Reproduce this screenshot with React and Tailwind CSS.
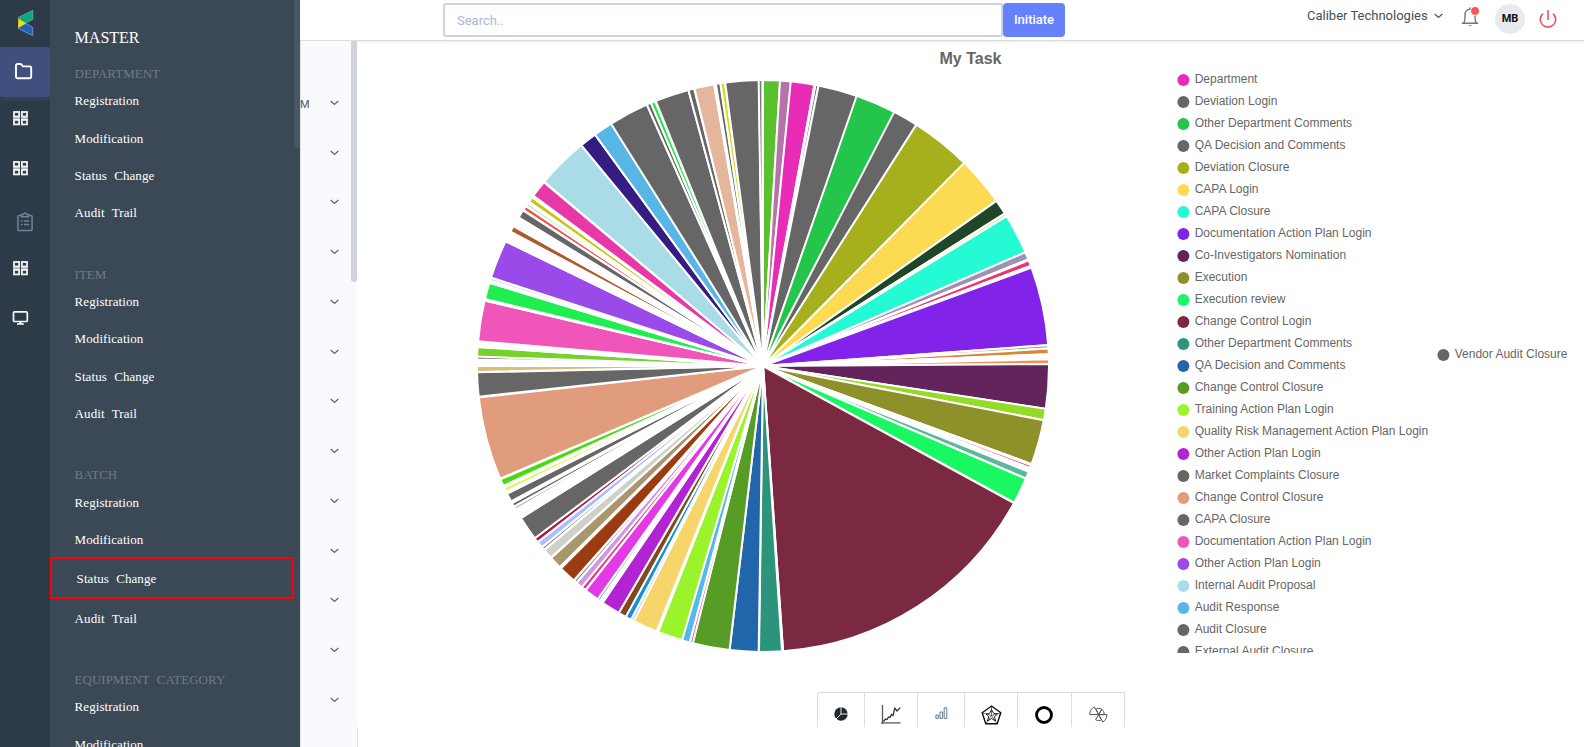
import React from "react";

const G = "#666666";

// [start, end, colour] in degrees clockwise from twelve o'clock
const SLICES = [
  [0.2, 3.22, "#5ac02d"], [3.62, 5.44, "#b673a9"], [5.77, 10.17, "#e92cb7"], [10.79, 10.99, G],
  [11.4, 19.04, G], [19.33, 27.24, "#23c64b"], [27.52, 32.31, G], [32.63, 44.57, "#a6b01c"],
  [44.95, 54.5, "#fcdb53"], [54.92, 57.54, "#204628"], [58.0, 58.2, "#cfe879"], [58.62, 66.4, "#24fad3"],
  [66.76, 67.91, "#9d92b3"], [68.52, 69.3, "#e8386f"], [70.08, 85.57, "#8223e9"], [86.04, 86.24, "#6fa35c"],
  [86.71, 87.45, "#db863d"], [88.86, 89.4, "#f98f4f"], [89.8, 98.47, "#63245b"], [98.81, 100.72, "#94da28"],
  [101.13, 109.86, "#8e9029"], [110.5, 110.75, "#f4489c"], [111.91, 112.96, "#5ab99c"], [113.41, 118.36, "#19f863"],
  [118.85, 175.77, "#7a2940"], [176.38, 180.6, "#2c947b"], [181.07, 186.51, "#2166aa"], [186.92, 194.08, "#579d25"],
  [194.4, 194.65, "#ee62b5"], [195.05, 196.3, "#52b8f0"], [196.65, 201.33, "#9af32b"], [202.05, 206.69, "#f6d56b"],
  [207.06, 207.26, "#a9b9ee"], [207.67, 208.5, "#1791d6"], [208.89, 210.12, "#80491f"], [210.51, 213.91, "#b123d3"],
  [214.97, 215.17, "#468c94"], [215.54, 218.14, "#e33ae6"], [218.6, 219.25, "#e83d80"], [219.51, 220.48, "#d098e4"],
  [220.92, 221.14, "#6f6f6f"], [221.63, 224.76, "#9c3a12"], [225.52, 227.6, "#a8966f"], [228.09, 229.7, "#cfd1c8"],
  [230.22, 230.42, "#6f6f6f"], [230.85, 231.76, "#aebdfd"], [232.19, 232.77, "#a91d45"], [233.15, 237.67, G],
  [240.09, 240.26, "#777777"], [240.76, 241.15, G], [241.93, 243.31, G], [244.19, 244.64, "#d2fc3c"],
  [245.42, 246.44, "#4bd915"], [247, 263.48, "#e19c7d"], [264.04, 268.53, G], [269, 269.8, "#d8be79"],
  [271.52, 271.75, "#777777"], [272.08, 273.62, "#75d22c"], [275.17, 283.02, "#f056b9"], [283.74, 286.74, "#1eee4f"],
  [287.57, 287.74, "#a5e5f0"], [288.22, 295.64, "#9a4ae9"], [298.22, 299.09, "#ad5b2d"], [301.49, 302.78, G],
  [303.28, 303.78, "#ee4f45"], [304.3, 304.5, "#94e68a"], [305.27, 306, "#cac414"], [306.76, 309.78, "#e838a7"],
  [310.3, 320.37, "#aadce8"], [320.75, 323.81, "#341c83"], [324.24, 327.75, "#57b6e6"], [328.12, 335.81, G],
  [336.26, 336.7, G], [337.13, 337.6, "#14f23f"], [338.17, 344.67, G], [345.09, 345.85, G],
  [346.33, 349.96, "#e4b79c"], [350.71, 351.19, G], [351.66, 352.14, "#d0dc1f"], [352.61, 359, G],
  [359.33, 359.66, "#777777"],
];

const R = 286;
const PAD = 0.2;
const pt = (deg) => {
  const a = (deg * Math.PI) / 180;
  return `${(R + Math.sin(a) * R).toFixed(2)} ${(R - Math.cos(a) * R).toFixed(2)}`;
};
const wedge = (a, b) => `M${R} ${R}L${pt(a)}A${R} ${R} 0 0 1 ${pt(b)}Z`;

function Pie() {
  return (
    <svg width="572" height="572" className="block shrink-0">
      {SLICES.map(([a, b, c], i) => {
        const next = SLICES[i + 1];
        return (
          <g key={i} stroke="#fff" strokeWidth="2" strokeLinejoin="bevel">
            <path d={wedge(a - PAD, b + PAD)} fill={c} />
            {next && next[0] - b > 0.6 && <path d={wedge(b + PAD, next[0] - PAD)} fill="#fff" />}
          </g>
        );
      })}
    </svg>
  );
}

const LEGEND = [
  ["#e92cb7", "Department"], [G, "Deviation Login"], ["#23c64b", "Other Department Comments"],
  [G, "QA Decision and Comments"], ["#a6b01c", "Deviation Closure"], ["#fcdb53", "CAPA Login"],
  ["#24fad3", "CAPA Closure"], ["#8223e9", "Documentation Action Plan Login"],
  ["#63245b", "Co-Investigators Nomination"], ["#8e9029", "Execution"], ["#19f863", "Execution review"],
  ["#7a2940", "Change Control Login"], ["#2c947b", "Other Department Comments"],
  ["#2166aa", "QA Decision and Comments"], ["#579d25", "Change Control Closure"],
  ["#9af32b", "Training Action Plan Login"], ["#f6d56b", "Quality Risk Management Action Plan Login"],
  ["#b123d3", "Other Action Plan Login"], [G, "Market Complaints Closure"],
  ["#e19c7d", "Change Control Closure"], [G, "CAPA Closure"], ["#f056b9", "Documentation Action Plan Login"],
  ["#9a4ae9", "Other Action Plan Login"], ["#aadce8", "Internal Audit Proposal"],
  ["#57b6e6", "Audit Response"], [G, "Audit Closure"], [G, "External Audit Closure"],
];

function LegendRow({ color, label }) {
  return (
    <div className="flex h-[22px] shrink-0 items-center whitespace-nowrap text-[12px] leading-[22px] text-[#666]">
      <svg width="13" height="12" className="mr-[4.7px] mt-[2px] shrink-0">
        <circle cx="6.4" cy="6" r="6" fill={color} />
      </svg>
      {label}
    </div>
  );
}

function GridIcon() {
  return (
    <svg width="15" height="15" viewBox="0 0 15 15" fill="none" stroke="#f2f3ee" strokeWidth="1.8">
      <path d="M0.1 7.2H6.9M8.1 7.2H14.9" stroke="#b0b5b8" strokeWidth="2.4" />
      <rect x="1" y="1" width="5.1" height="4.5" />
      <rect x="8.9" y="1" width="5.1" height="4.5" />
      <rect x="1" y="8.9" width="5.1" height="4.5" />
      <rect x="8.9" y="8.9" width="5.1" height="4.5" />
    </svg>
  );
}

function Rail() {
  return (
    <div className="flex w-[50px] shrink-0 flex-col bg-[#2d3a47]">
      <div className="flex h-[47px] pl-[18px] pt-[10px]">
        <svg width="16" height="27" viewBox="0 0 16 27">
          <path d="M0.3 7.5L14.8 0.3V9.2L7.8 13.2L0.3 8.6Z" fill="#0ea57f" stroke="#6fd0b4" strokeWidth="0.6" />
          <path d="M0.3 17.6L7.8 13.4L14.8 17.5V25.6L0.3 18.6Z" fill="#2463b5" stroke="#9bbce6" strokeWidth="0.6" />
          <path d="M0.2 8.4L8 13.2L0.2 18Z" fill="#fbd914" />
        </svg>
      </div>
      <div className="h-[50px] rounded-[2px] bg-[#414f7f] pl-[15px] pt-[16px] shadow-[0_3px_6px_rgba(65,79,110,0.55)]">
        <svg width="18" height="17" viewBox="0 0 18 17" fill="none" stroke="#fff" strokeWidth="1.9" strokeLinejoin="round">
          <path d="M1 2.6Q1 1 2.6 1H6L8 3.4H14.6Q16.2 3.4 16.2 5V13.6Q16.2 15.2 14.6 15.2H2.6Q1 15.2 1 13.6Z" />
        </svg>
      </div>
      <div className="h-[50px] pl-[13px] pt-[14px]"><GridIcon /></div>
      <div className="h-[50px] pl-[13px] pt-[14px]"><GridIcon /></div>
      <div className="h-[50px] pl-[17px] pt-[15px]">
        <svg width="16" height="20" viewBox="0 0 16 20" fill="none" stroke="#72809a" strokeWidth="1.5">
          <path d="M4.5 3.4H2Q0.9 3.4 0.9 4.5V17.4Q0.9 18.5 2 18.5H14Q15.1 18.5 15.1 17.4V4.5Q15.1 3.4 14 3.4H11.5" />
          <path d="M4.5 4.8V2.6H6.3Q6.5 1 8 1T9.7 2.6H11.5V4.8Z" />
          <path d="M3.8 9H5.6M7 9H12.2M3.8 12.6H5.6M7 12.6H12.2" />
        </svg>
      </div>
      <div className="h-[50px] pl-[13px] pt-[14px]"><GridIcon /></div>
      <div className="h-[50px] pl-[12px] pt-[14px]">
        <svg width="17" height="15" viewBox="0 0 17 15" fill="none" stroke="#f7f7f2" strokeWidth="1.7">
          <rect x="1.5" y="0.9" width="13.8" height="9.6" rx="1" />
          <path d="M5 13H11.8" strokeWidth="1.6" />
          <path d="M8.4 10.5V13" strokeWidth="2.6" />
        </svg>
      </div>
    </div>
  );
}

const GROUPS = ["DEPARTMENT", "ITEM", "BATCH", "EQUIPMENT CATEGORY"];
const ITEMS = ["Registration", "Modification", "Status Change", "Audit Trail"];

function Menu() {
  return (
    <div className="flex w-[250px] shrink-0 overflow-hidden bg-[#3b4856] font-['Liberation_Serif','Times_New_Roman',serif] text-[13px] [word-spacing:4px]">
      <div className="w-[244px] shrink-0">
        <div className="h-[64px] pl-[24.6px] pt-[26px] text-[16px] leading-[24px] text-white">MASTER</div>
        {GROUPS.map((g) => (
          <div key={g} className="mb-[34px]">
            <div className="h-[17.3px] pl-[24.6px] leading-[20px] text-[#727b84]">{g}</div>
            {ITEMS.map((t) => (
              <div
                key={t}
                className={
                  "box-content h-[37.35px] pl-[24.6px] leading-[39.2px] tracking-[0.08px] text-white " +
                  (g === "BATCH" && t === "Status Change" ? "w-[215.4px] border-2 border-[#fb0007]" : "")
                }
              >
                {t}
              </div>
            ))}
          </div>
        ))}
      </div>
      <div className="ml-auto h-[148px] w-[6px] rounded-b-[3px] bg-[#4a5767]" />
    </div>
  );
}

function Chevron({ className, color = "#555" }) {
  return (
    <svg width="9" height="6" viewBox="0 0 9 6" fill="none" stroke={color} strokeWidth="1.3" className={className}>
      <path d="M0.7 0.9L4.5 4.4L8.3 0.9" />
    </svg>
  );
}

function Header() {
  return (
    <header className="flex h-[41px] shrink-0 border-b border-[#dcdcdc] bg-white pl-[143px] shadow-[0_1px_2px_rgba(0,0,0,0.08)]">
      <div className="mt-[3px] flex h-[34px]">
        <div className="w-[560px] rounded-[3px] border-2 border-[#cad5e2] pl-[12px] text-[13px] leading-[31px] text-[#a8b8d6]">
          Search..
        </div>
        <div className="w-[62px] rounded-[4px] bg-[#6681fb] text-center text-[13px] font-medium leading-[33px] text-white">
          Initiate
        </div>
      </div>
      <div className="ml-[242px] mt-[6px] h-[20px] w-[121px] whitespace-nowrap text-[13px] leading-[20px] text-[#484e55]">
        Caliber Technologies
      </div>
      <Chevron className="ml-[6px] mt-[13px] shrink-0" />
      <svg width="20" height="21" viewBox="0 0 20 21" fill="none" className="ml-[18px] mt-[6px] shrink-0">
        <path d="M0.8 17.2H17.2M2.6 17.2C4 15.6 4 14 4 9.4C4 5.4 5.6 3.3 9 3.1C12.4 3.3 14 5.4 14 9.4C14 14 14 15.6 15.4 17.2M9 3V1.4" stroke="#66788c" strokeWidth="1.4" />
        <path d="M7 19.2Q9 21 11 19.2Z" fill="#66788c" />
        <circle cx="14" cy="5" r="4.5" fill="#ff5555" stroke="#fff" strokeWidth="1" />
      </svg>
      <div className="ml-[14px] mt-[4px] h-[30px] w-[30px] rounded-full bg-[#e8ebee] text-center text-[11px] font-bold leading-[29px] text-[#111]">
        MB
      </div>
      <svg width="18" height="19" viewBox="0 0 18 19" fill="none" stroke="#e9535d" strokeWidth="1.6" className="ml-[14px] mt-[10px]">
        <path d="M9 0V10" />
        <path d="M4 3.6A7.7 7.7 0 1 0 14 3.6" />
      </svg>
    </header>
  );
}

function SidePanel() {
  return (
    <div className="flex w-[57px] shrink-0 justify-between border-l border-[#e3e4e8] bg-[#f9fafd]">
      <div className="flex w-[40px] flex-col pt-[37px]">
        {Array.from({ length: 13 }, (_, i) => (
          <div key={i} className="flex h-[49.75px] shrink-0 items-center">
            <span className="-ml-px w-[29.5px] pt-[4px] text-[11px] text-[#555]">{i === 0 ? "M" : ""}</span>
            <Chevron color="#666" />
          </div>
        ))}
      </div>
      <div className="h-[241px] w-[6px] rounded-b-[3px] bg-[#ced3dd]" />
    </div>
  );
}

function PieGlyph() {
  return (
    <svg width="14" height="14" viewBox="0 0 14 14" className="ml-[16px] mt-[14px]">
      <circle cx="7" cy="7" r="6.7" fill="#212930" />
      <path d="M7 0V7H14M7 7L2 12" stroke="#fff" strokeWidth="0.9" fill="none" />
    </svg>
  );
}
function LineGlyph() {
  return (
    <svg width="20" height="20" viewBox="0 0 20 20" fill="none" className="ml-[16px] mt-[12px]">
      <path d="M1.5 0V19M0 17.8H19.5" stroke="#555" strokeWidth="1.3" />
      <path d="M2.5 16.5L4.5 14L6 14.5L7.5 12L9 12.5L10.5 9.5L12 10.5L13.8 3.2L16 6L19.3 2.6" stroke="#333" strokeWidth="1.3" />
    </svg>
  );
}
function BarGlyph() {
  return (
    <svg width="13" height="12" viewBox="0 0 13 12" fill="none" stroke="#566b80" strokeWidth="0.9" className="ml-[17px] mt-[14px]">
      <path d="M0.9 8H3.3V11.4H0.9ZM5 5H7.6V11.4H5ZM9.2 0.8H11.8V11.4H9.2Z" />
    </svg>
  );
}
function RadarGlyph() {
  return (
    <svg width="21" height="20" viewBox="0 0 21 20" fill="none" stroke="#111" className="ml-[16px] mt-[12px]">
      <path d="M10.5 1L19.8 7.8L16.2 18.8H4.8L1.2 7.8Z" strokeWidth="1.4" />
      <path d="M10.5 4.5L12.6 8.3L16.5 9L13.5 11.5L14.5 16L10.5 13.5L6.5 16L7.8 11.5L5 9L8.6 8.3Z" strokeWidth="0.9" />
      <path d="M10.5 10.5V1M10.5 10.5L19.8 7.8M10.5 10.5L16.2 18.8M10.5 10.5L4.8 18.8M10.5 10.5L1.2 7.8" strokeWidth="0.6" />
    </svg>
  );
}
function DonutGlyph() {
  return (
    <svg width="18" height="18" viewBox="0 0 18 18" fill="none" className="ml-[17px] mt-[13px]">
      <circle cx="9" cy="9" r="7.5" stroke="#000" strokeWidth="2.8" />
    </svg>
  );
}
function PolarGlyph() {
  return (
    <svg width="19" height="18" viewBox="0 0 19 18" fill="none" stroke="#555" strokeWidth="1" strokeLinejoin="round" className="ml-[17px] mt-[13px]">
      <path d="M9.6 8.6H0.7C0.7 4.6 2.6 2.2 5.4 1Z" />
      <path d="M9.6 8.6L7 3.2C8.6 2.2 11 2.2 12.8 3.2Z" />
      <path d="M9.6 8.6L12.8 3.2C14.4 4.4 15.2 6.4 15.2 8.6Z" />
      <path d="M9.6 8.6H17.9C17.9 11.6 16.6 14.6 13.8 16Z" />
      <path d="M9.6 8.6L12.6 13.8C11 14.8 8.4 14.8 6.6 13.8Z" />
    </svg>
  );
}

function Tabs() {
  return (
    <div className="ml-[460px] mt-[39px] flex h-[35px] shrink-0 [&>div]:border-r [&>div]:border-t [&>div]:border-[#dcdcdc]">
      <div className="w-[48px] rounded-tl-[3px] border-l"><PieGlyph /></div>
      <div className="w-[53px]"><LineGlyph /></div>
      <div className="w-[47px]"><BarGlyph /></div>
      <div className="w-[53px]"><RadarGlyph /></div>
      <div className="w-[54px]"><DonutGlyph /></div>
      <div className="w-[53px]"><PolarGlyph /></div>
    </div>
  );
}

function Dashboard() {
  return (
    <main className="flex grow flex-col font-['Liberation_Sans',Arial,sans-serif]">
      <div className="flex h-[612px] shrink-0">
        <div className="flex w-[820px] shrink-0 flex-col">
          <div className="h-[39px] pl-[582.5px] text-[16px] font-bold leading-[35px] text-[#666]">
            <span className="whitespace-nowrap">My Task</span>
          </div>
          <div className="ml-[120px] flex h-[573px]"><Pie /></div>
        </div>
        <div className="flex w-[260px] shrink-0 flex-col overflow-hidden pt-[27px]">
          {LEGEND.map(([c, t], i) => <LegendRow key={i} color={c} label={t} />)}
        </div>
        <div className="pt-[302px]"><LegendRow color={G} label="Vendor Audit Closure" /></div>
      </div>
      <Tabs />
      <div className="grow border-l border-[#e3e4e8]" />
    </main>
  );
}

export default function App() {
  return (
    <div className="flex h-[747px] w-[1584px] overflow-hidden bg-white font-['Roboto',sans-serif]">
      <Rail />
      <Menu />
      <div className="flex w-[1284px] shrink-0 flex-col">
        <Header />
        <div className="flex min-h-0 grow">
          <SidePanel />
          <Dashboard />
        </div>
      </div>
    </div>
  );
}
